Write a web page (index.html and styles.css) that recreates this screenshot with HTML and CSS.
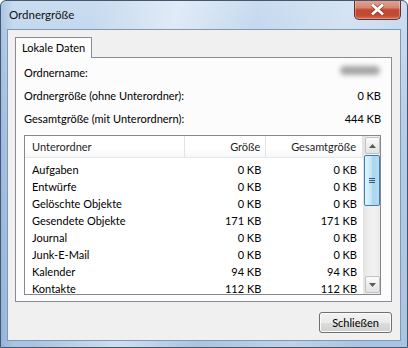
FILE: index.html
```html
<!DOCTYPE html>
<html lang="de">
<head>
    <meta charset="UTF-8">
    <title>Ordnergröße</title>
    <link rel="stylesheet" href="styles.css">
</head>
<body>
    <div class="window">
        <div class="titlebar">
            <span class="title">Ordnergröße</span>
            <div class="close-btn">
                <svg width="13" height="11" viewBox="0 0 13 11">
                    <path d="M2 1.5 L11 9.5 M11 1.5 L2 9.5" stroke="#5b2318" stroke-width="4.4" stroke-linecap="square" opacity="0.5"/>
                    <path d="M2 1.5 L11 9.5 M11 1.5 L2 9.5" stroke="#ffffff" stroke-width="2.8" stroke-linecap="square"/>
                </svg>
            </div>
        </div>
        <div class="client">
            <div class="tabs">
                <div class="tab">Lokale Daten</div>
            </div>
            <div class="panel">
                <div class="info-row">
                    <span>Ordnername:</span>
                    <span class="blurred"></span>
                </div>
                <div class="info-row">
                    <span>Ordnergröße (ohne Unterordner):</span>
                    <span>0 KB</span>
                </div>
                <div class="info-row">
                    <span>Gesamtgröße (mit Unterordnern):</span>
                    <span>444 KB</span>
                </div>

                <div class="listbox">
                    <div class="list-main">
                        <div class="list-header">
                            <div class="col-name">Unterordner</div>
                            <div class="col-size">Größe</div>
                            <div class="col-total">Gesamtgröße</div>
                        </div>
                        <div class="list-body" id="listBody"></div>
                    </div>
                    <div class="scrollbar">
                        <div class="scroll-btn">
                            <svg width="7" height="4" viewBox="0 0 7 4"><path d="M0 4 L3.5 0 L7 4 Z" fill="#5a5a5a"/></svg>
                        </div>
                        <div class="scroll-track">
                            <div class="scroll-thumb">
                                <span class="grip"></span>
                                <span class="grip"></span>
                                <span class="grip"></span>
                            </div>
                        </div>
                        <div class="scroll-btn">
                            <svg width="7" height="4" viewBox="0 0 7 4"><path d="M0 0 L7 0 L3.5 4 Z" fill="#5a5a5a"/></svg>
                        </div>
                    </div>
                </div>
            </div>
            <div class="buttons">
                <button class="btn">Schließen</button>
            </div>
        </div>
    </div>

    <script>
        const folders = [
            ['Aufgaben', '0 KB', '0 KB'],
            ['Entwürfe', '0 KB', '0 KB'],
            ['Gelöschte Objekte', '0 KB', '0 KB'],
            ['Gesendete Objekte', '171 KB', '171 KB'],
            ['Journal', '0 KB', '0 KB'],
            ['Junk-E-Mail', '0 KB', '0 KB'],
            ['Kalender', '94 KB', '94 KB'],
            ['Kontakte', '112 KB', '112 KB']
        ];

        // Zeilen der Liste erzeugen
        const body = document.getElementById('listBody');
        folders.forEach(f => {
            const row = document.createElement('div');
            row.className = 'list-row';
            row.innerHTML = `
                <div class="col-name">${f[0]}</div>
                <div class="col-size">${f[1]}</div>
                <div class="col-total">${f[2]}</div>
            `;
            body.appendChild(row);
        });
    </script>
</body>
</html>
```

FILE: styles.css
```css
body {
    margin: 0;
    background: #ffffff;
    font-family: Lato, "Noto Sans", Arial, sans-serif;
    font-size: 11px;
    color: #000;
}
.window {
    width: 408px;
    height: 348px;
    box-sizing: border-box;
    border: 1px solid #43586f;
    border-radius: 6px 6px 0 0;
    display: flex;
    flex-direction: column;
    background:
        linear-gradient(100deg, rgba(255,255,255,0) 20%, rgba(255,255,255,0.45) 38%, rgba(255,255,255,0) 55%, rgba(255,255,255,0.25) 75%, rgba(255,255,255,0) 90%),
        linear-gradient(to right, rgba(80,130,190,0.25), rgba(80,130,190,0) 3%),
        linear-gradient(#c9dcf0, #b4cde8 40%, #a9c4e2);
    overflow: hidden;
}
.titlebar {
    height: 28px;
    display: flex;
    justify-content: space-between;
    align-items: flex-start;
}
.title {
    padding: 6px 0 0 8px;
    line-height: 16px;
    font-size: 11.5px;
    color: #111;
}
.close-btn {
    width: 45px;
    height: 19px;
    margin: -1px 6px 0 0;
    border: 1px solid #6b2d22;
    border-top: none;
    border-radius: 0 0 5px 5px;
    display: flex;
    align-items: center;
    justify-content: center;
    background: linear-gradient(#e3a797 0%, #d58573 40%, #c14a33 52%, #c24a31 80%, #d06e56 100%);
    box-shadow: inset 0 0 0 1px rgba(255,255,255,0.3);
}
.client {
    flex: 1;
    margin: 0 6px 6px 6px;
    border: 1px solid #8397b0;
    background: #f0f0f0;
    display: flex;
    flex-direction: column;
    padding: 0 8px 0 7px;
}
.tabs {
    display: flex;
    margin-top: 7px;
}
.tab {
    height: 20px;
    line-height: 20px;
    padding: 0 6px;
    border: 1px solid #898c95;
    border-bottom: none;
    background: #fcfcfc;
    margin-bottom: -1px;
    position: relative;
    z-index: 1;
}
.panel {
    height: 245px;
    box-sizing: border-box;
    border: 1px solid #898c95;
    background: #fcfcfc;
    padding: 3px 10px 0 8px;
}
.info-row {
    height: 23px;
    line-height: 23px;
    display: flex;
    justify-content: space-between;
    align-items: center;
}
.blurred {
    width: 40px;
    height: 9px;
    margin: 0 1px 4px 0;
    border-radius: 5px;
    background: #a5a5a5;
    filter: blur(2.5px);
}
.listbox {
    margin-top: 5px;
    height: 160px;
    box-sizing: border-box;
    border: 1px solid #828790;
    background: #ffffff;
    display: flex;
    overflow: hidden;
}
.list-main {
    flex: 1;
    overflow: hidden;
}
.list-header {
    display: flex;
    height: 22px;
    box-sizing: border-box;
    line-height: 21px;
    border-bottom: 1px solid #e8e8e8;
    background: linear-gradient(#ffffff, #ffffff 60%, #f6f7f9);
}
.list-header > div {
    border-right: 1px solid #e3e3e3;
    color: #1e1e1e;
}
.list-body {
    padding-top: 3px;
}
.list-row {
    display: flex;
    height: 17px;
    line-height: 17px;
}
.col-name {
    width: 160px;
    box-sizing: border-box;
    padding-left: 7px;
}
.col-size {
    width: 82px;
    box-sizing: border-box;
    text-align: right;
    padding-right: 5px;
}
.col-total {
    width: 97px;
    box-sizing: border-box;
    text-align: right;
    padding-right: 6px;
}
.scrollbar {
    width: 17px;
    display: flex;
    flex-direction: column;
    background: linear-gradient(to right, #e2e2e2, #efefef 35%, #f2f2f2 70%, #e9e9e9);
}
.scroll-btn {
    height: 15px;
    margin: 1px 0 1px 2px;
    border: 1px solid #c2c2c2;
    border-radius: 2px;
    background: linear-gradient(#fbfbfb, #eeeeee 50%, #e2e2e2);
    display: flex;
    align-items: center;
    justify-content: center;
}
.scroll-track {
    flex: 1;
}
.scroll-thumb {
    height: 49px;
    margin: 0 0 0 1px;
    border: 1px solid #3c7fb1;
    border-radius: 2px;
    background: linear-gradient(to right, #e3f4fc, #c4e5f6 45%, #a9d6ee 55%, #b9dcf1);
    display: flex;
    flex-direction: column;
    align-items: center;
    justify-content: center;
    gap: 1px;
}
.grip {
    width: 6px;
    height: 1px;
    background: #2d5a83;
}
.buttons {
    display: flex;
    justify-content: flex-end;
    margin-top: 10px;
}
.btn {
    width: 73px;
    height: 21px;
    padding: 0;
    font-family: Lato, "Noto Sans", Arial, sans-serif;
    font-size: 11px;
    color: #000;
    border: 1px solid #707070;
    border-radius: 3px;
    background: linear-gradient(#f2f2f2 0%, #ebebeb 50%, #dddddd 51%, #cfcfcf 100%);
    box-shadow: inset 0 0 0 1px #fbfbfb;
}
```
